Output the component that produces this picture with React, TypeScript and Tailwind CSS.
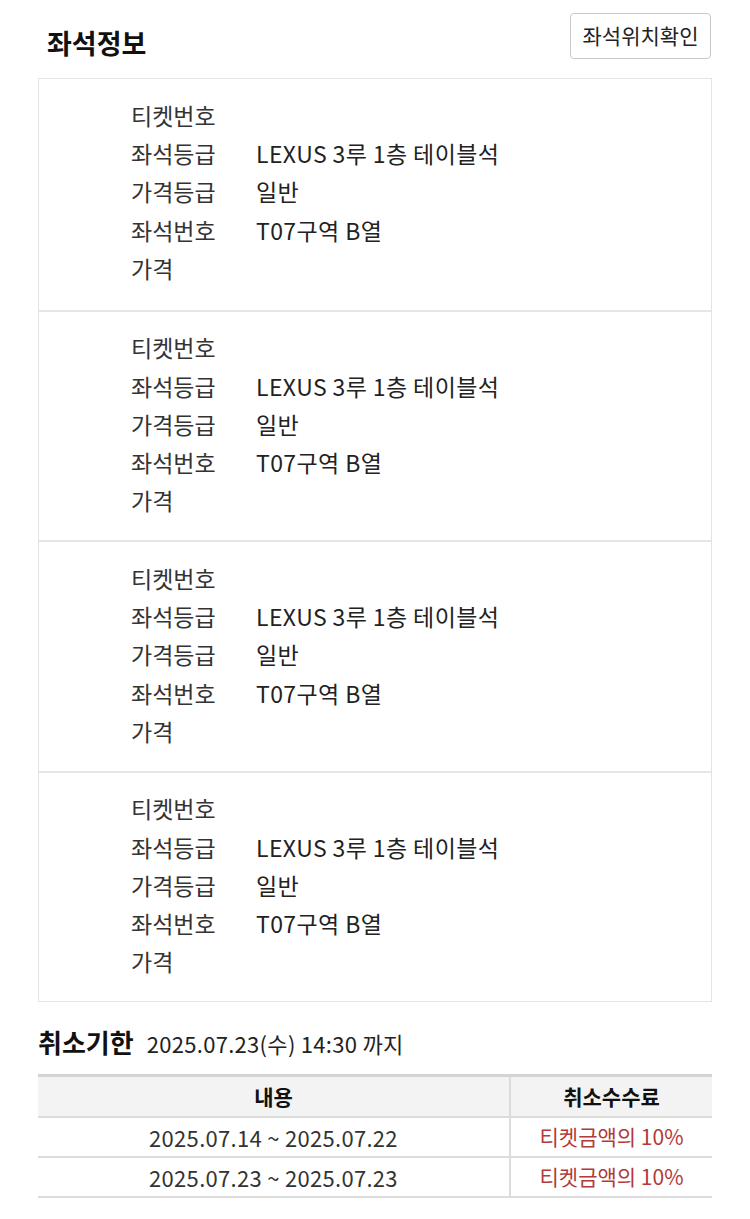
const seats = [
  { grade: "LEXUS 3루 1층 테이블석", price: "일반", seat: "T07구역 B열" },
  { grade: "LEXUS 3루 1층 테이블석", price: "일반", seat: "T07구역 B열" },
  { grade: "LEXUS 3루 1층 테이블석", price: "일반", seat: "T07구역 B열" },
  { grade: "LEXUS 3루 1층 테이블석", price: "일반", seat: "T07구역 B열" },
];

const fees = [
  { range: "2025.07.14 ~ 2025.07.22", fee: "티켓금액의 10%" },
  { range: "2025.07.23 ~ 2025.07.23", fee: "티켓금액의 10%" },
];

function Row({ label, value }: { label: string; value?: string }) {
  return (
    <div className="flex h-[38.25px] items-center">
      <div className="w-[125px] text-[#333]">{label}</div>
      <div className="tracking-[0.4px] text-[#222]">{value ?? ""}</div>
    </div>
  );
}

export default function App() {
  return (
    <main
      className="h-[1219px] overflow-hidden bg-white text-[23px] text-[#222]"
      style={{ fontFamily: '"Noto Sans CJK KR", "Noto Sans", sans-serif' }}
    >
      {/* 좌석정보 header */}
      <div className="flex h-[78px] items-start justify-between pl-[47px] pr-[39px]">
        <h2 className="pt-[25px] text-[27px] font-bold leading-[36px] text-[#111]">좌석정보</h2>
        <button className="mt-[13px] h-[46px] w-[141px] rounded-[4px] border border-[#c9c9c9] bg-white text-[21px] text-[#222]">
          좌석위치확인
        </button>
      </div>

      {/* seat cards */}
      <div className="mx-[38px] border border-[#e3e3e3]">
        {seats.map((s, i) => (
          <div
            key={i}
            className={`h-[230.5px] pl-[92px] pt-[17px] ${i > 0 ? "border-t-2 border-[#e6e6e6]" : ""}`}
          >
            <Row label="티켓번호" />
            <Row label="좌석등급" value={s.grade} />
            <Row label="가격등급" value={s.price} />
            <Row label="좌석번호" value={s.seat} />
            <Row label="가격" />
          </div>
        ))}
      </div>

      {/* 취소기한 */}
      <div className="mx-[38px] flex items-baseline gap-[13px] pt-[20px]">
        <span className="text-[26px] font-bold text-[#111]">취소기한</span>
        <span className="text-[22px] tracking-[0.3px] text-[#222]">2025.07.23(수) 14:30 까지</span>
      </div>

      <div className="mx-[38px] mt-[13px] border-t-[3px] border-[#d4d4d4] text-[21px]">
        <div className="flex h-[39px] bg-[#f3f3f3] font-bold text-[#111]">
          <div className="flex w-[471px] items-center justify-center">내용</div>
          <div className="flex flex-1 items-center justify-center border-l-2 border-[#dcdcdc]">
            취소수수료
          </div>
        </div>
        {fees.map((f, i) => (
          <div key={i} className="flex h-[40px] border-t-2 border-[#dcdcdc]">
            <div className="flex w-[471px] items-center justify-center text-[22px] tracking-[0.3px] text-[#333]">
              {f.range}
            </div>
            <div className="flex flex-1 items-center justify-center border-l-2 border-[#dcdcdc] text-[#b23a3a]">
              {f.fee}
            </div>
          </div>
        ))}
        <div className="border-t-2 border-[#dcdcdc]" />
      </div>

      <p className="pl-[80px] pt-[15px] text-[22px] text-[#222]">
        예매 수수료는 예매일 이후 취소 시에는 환불되지 않습니다.
      </p>
    </main>
  );
}
